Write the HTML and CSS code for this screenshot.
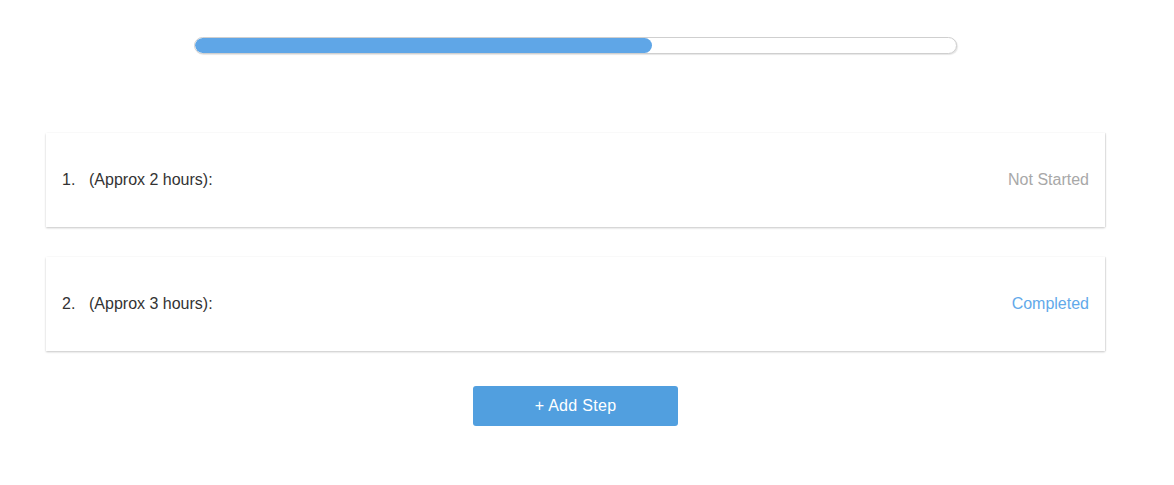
FILE: index.html
```html
<!DOCTYPE html>
<html>
<head>
<meta charset="utf-8">
<link rel="stylesheet" href="styles.css">
</head>
<body>
<div class="page">
  <div class="progress-wrap">
    <div class="progress">
      <div class="progress-fill" style="width: 60%"></div>
    </div>
  </div>
  <div class="steps">
    <div class="card">
      <div class="card-left"><span class="num">1.</span><span class="label">(Approx 2 hours):</span></div>
      <div class="status not-started">Not Started</div>
    </div>
    <div class="card">
      <div class="card-left"><span class="num">2.</span><span class="label">(Approx 3 hours):</span></div>
      <div class="status completed">Completed</div>
    </div>
  </div>
  <div class="actions">
    <button class="add-btn">+ Add Step</button>
  </div>
</div>
</body>
</html>
```
FILE: styles.css
```css
html, body {
  margin: 0;
  padding: 0;
  background: #fff;
}
body {
  font-family: "Liberation Sans", Arial, sans-serif;
  color: #333;
}
.page {
  width: 1151px;
  padding-top: 37px;
}
.progress-wrap {
  display: flex;
  justify-content: center;
}
.progress {
  width: 763px;
  height: 17px;
  box-sizing: border-box;
  border: 1px solid #cfcfcf;
  border-radius: 9px;
  background: #fff;
  overflow: hidden;
  box-shadow: 1px 1px 1px rgba(0,0,0,0.1);
}
.progress-fill {
  height: 100%;
  background: #5fa6e7;
  border-radius: 9px;
}
.steps {
  margin: 79px 46px 0;
  display: flex;
  flex-direction: column;
  gap: 30px;
}
.card {
  height: 94px;
  box-sizing: border-box;
  padding: 0 16px 0 16px;
  display: flex;
  align-items: center;
  justify-content: space-between;
  background: #fff;
  box-shadow: 0 1px 2px rgba(0,0,0,0.22), 1px 0 1px rgba(0,0,0,0.06);
  font-size: 16px;
}
.card-left {
  display: flex;
  align-items: center;
}
.num {
  width: 27px;
}
.label {
  color: #333;
}
.status.not-started {
  color: #a8a8a8;
}
.status.completed {
  color: #62a9ea;
}
.actions {
  display: flex;
  justify-content: center;
  margin-top: 35px;
}
.add-btn {
  width: 205px;
  height: 40px;
  border: none;
  border-radius: 3px;
  background: #519fdf;
  color: #fff;
  font-family: "Liberation Sans", Arial, sans-serif;
  font-size: 16px;
  letter-spacing: 0.3px;
  cursor: pointer;
}
```
